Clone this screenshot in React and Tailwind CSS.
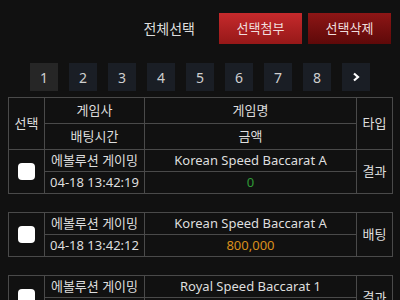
import React from 'react';

const pages = ['1', '2', '3', '4', '5', '6', '7', '8'];

const bets = [
  { vendor: '에볼루션 게이밍', game: 'Korean Speed Baccarat A', time: '04-18 13:42:19', amount: '0', color: 'text-[#2f9a36]', type: '결과' },
  { vendor: '에볼루션 게이밍', game: 'Korean Speed Baccarat A', time: '04-18 13:42:12', amount: '800,000', color: 'text-[#d98f1c]', type: '배팅' },
  { vendor: '에볼루션 게이밍', game: 'Royal Speed Baccarat 1', time: '04-18 13:42:05', amount: '800,000', color: 'text-[#2f9a36]', type: '결과' },
];

const cell = 'border border-[#4a4a4a] text-center';

const Cols = () => (
  <colgroup>
    <col className="w-[36px]" />
    <col className="w-[100px]" />
    <col className="w-[212px]" />
    <col className="w-[36px]" />
  </colgroup>
);

const App = () => {
  return (
    <div className="w-[400px] h-[300px] overflow-hidden bg-[#111111] text-[#dedede] text-[13px] font-['Noto_Sans','Noto_Sans_CJK_KR',sans-serif]">
      <div className="flex justify-end items-center pt-[13px] pr-[9px]">
        <span className="mr-[24px] text-[14px]">전체선택</span>
        <button className="w-[83px] h-[31px] text-[13px] text-[#f0dede] bg-gradient-to-b from-[#c62a2c] to-[#961818]">선택첨부</button>
        <button className="ml-[6px] w-[83px] h-[31px] text-[13px] text-[#f0dede] bg-gradient-to-b from-[#8e1616] to-[#5e0909]">선택삭제</button>
      </div>

      <div className="flex justify-center gap-[11px] mt-[19px]">
        {pages.map((p, i) => (
          <div key={p} className={`w-[28px] h-[28px] flex items-center justify-center text-[14px] ${i === 0 ? 'bg-[#262626] text-[#cfcfcf]' : 'bg-[#1a1e25] text-[#cfcfcf]'}`}>
            {p}
          </div>
        ))}
        <div className="w-[28px] h-[28px] flex items-center justify-center bg-[#1a1e25] text-white">
          <svg width="10" height="10" viewBox="0 0 10 10"><path d="M3 1.5 L7 5 L3 8.5" stroke="white" strokeWidth="2.2" fill="none" /></svg>
        </div>
      </div>

      <div className="px-[8px] mt-[6px]">
        <table className="w-[384px] table-fixed border-collapse">
          <Cols />
          <thead>
            <tr className="h-[26px]">
              <th rowSpan={2} className={`${cell} font-normal`}>선택</th>
              <th className={`${cell} font-normal`}>게임사</th>
              <th className={`${cell} font-normal`}>게임명</th>
              <th rowSpan={2} className={`${cell} font-normal`}>타입</th>
            </tr>
            <tr className="h-[26px]">
              <th className={`${cell} font-normal`}>배팅시간</th>
              <th className={`${cell} font-normal`}>금액</th>
            </tr>
          </thead>
          <tbody>
            <BetRows bet={bets[0]} />
          </tbody>
        </table>

        {bets.slice(1).map((b, i) => (
          <table key={i} className="w-[384px] table-fixed border-collapse mt-[18px]">
            <Cols />
            <tbody>
              <BetRows bet={b} />
            </tbody>
          </table>
        ))}
      </div>
    </div>
  );
};

const BetRows = ({ bet }) => (
  <>
    <tr className="h-[22px]">
      <td rowSpan={2} className={cell}>
        <div className="mx-auto w-[17px] h-[17px] rounded-[4px] bg-white" />
      </td>
      <td className={cell}>{bet.vendor}</td>
      <td className={cell}>{bet.game}</td>
      <td rowSpan={2} className={cell}>{bet.type}</td>
    </tr>
    <tr className="h-[22px]">
      <td className={cell}>{bet.time}</td>
      <td className={`${cell} ${bet.color}`}>{bet.amount}</td>
    </tr>
  </>
);

export default App;
